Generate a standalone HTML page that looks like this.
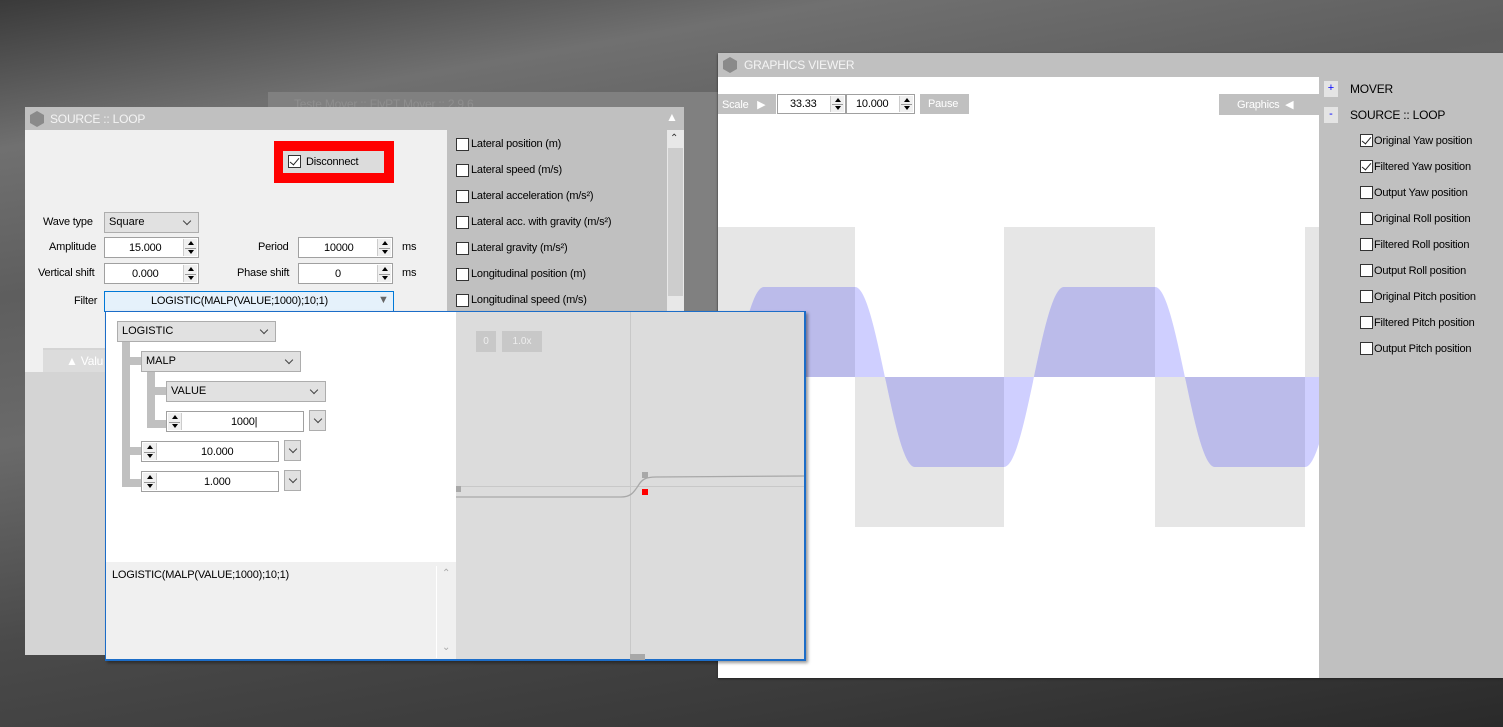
<!DOCTYPE html>
<html><head><meta charset="utf-8">
<style>
*{box-sizing:border-box;margin:0;padding:0}
body{width:1503px;height:727px;overflow:hidden;position:relative;font-family:"Liberation Sans",sans-serif;font-size:11px;color:#000;
background:linear-gradient(170deg,#3a3a3a 0%,#707070 15%,#5e5e5e 30%,#6a6a6a 45%,#4a4a4a 65%,#3a3a3a 85%,#2a2a2a 100%);}
.a{position:absolute}
.t{position:absolute;white-space:nowrap;letter-spacing:-0.2px}
.tb{background:#c0c0c0;color:#f4f4f4;font-size:12px}
.hex{position:absolute;width:14px;height:16px;background:#8a8a8a;clip-path:polygon(50% 0,100% 25%,100% 75%,50% 100%,0 75%,0 25%)}
.box{position:absolute;background:#fff;border:1px solid #a0a0a0}
.cmb{position:absolute;background:#e1e1e1;border:1px solid #adadad;padding-left:4px;line-height:19px}
.cmb:after{content:"";position:absolute;right:8px;top:5px;width:5px;height:5px;border-right:1px solid #444;border-bottom:1px solid #444;transform:rotate(45deg)}
.spin{position:absolute;top:1px;bottom:1px;width:14px;background:#f0f0f0;border-left:1px solid #ccc}
.spin:before{content:"";position:absolute;left:4px;top:2px;border:3px solid transparent;border-bottom:4px solid #000;border-top:0}
.spin:after{content:"";position:absolute;left:4px;bottom:2px;border:3px solid transparent;border-top:4px solid #000;border-bottom:0}
.spin i{position:absolute;left:1px;right:1px;top:50%;height:1px;background:#999}
.cb{position:absolute;width:13px;height:13px;background:#fff;border:1px solid #333}
.ck:after{content:"";position:absolute;left:3px;top:0px;width:4px;height:8px;border-right:1.5px solid #222;border-bottom:1.5px solid #222;transform:rotate(40deg)}
.dd{position:absolute;width:17px;height:21px;background:#e1e1e1;border:1px solid #adadad}
.dd:after{content:"";position:absolute;left:5px;top:5px;width:5px;height:5px;border-right:1px solid #444;border-bottom:1px solid #444;transform:rotate(45deg)}
.bar{position:absolute;background:#c0c0c0}
.box .t{top:4px}
</style></head><body>

<!-- background window -->
<div class="a" style="left:268px;top:92px;width:450px;height:568px;background:#808080"></div>
<div class="t" style="left:294px;top:97px;color:#8e8e8e;font-size:12px">Teste Mover :: FlyPT Mover :: 2.9.6</div>

<!-- SOURCE :: LOOP window -->
<div class="a" style="left:25px;top:107px;width:659px;height:548px;background:#d4d4d4"></div>
<div class="a tb" style="left:25px;top:107px;width:659px;height:23px"></div>
<div class="hex" style="left:30px;top:111px"></div>
<div class="t" style="left:50px;top:112px;color:#f4f4f4;font-size:12px">SOURCE :: LOOP</div>
<div class="t" style="left:666px;top:110px;color:#fff;font-size:12px">▲</div>
<div class="a" style="left:25px;top:130px;width:422px;height:218px;background:#f0f0f0"></div>
<div class="a" style="left:25px;top:348px;width:18px;height:24px;background:#f0f0f0"></div>
<div class="a" style="left:43px;top:350px;width:62px;height:22px;background:#dcdcdc"></div>
<div class="t" style="left:66px;top:354px;color:#fff;font-size:12px">▲ Valu</div>

<div class="a" style="left:274px;top:141px;width:120px;height:42px;background:#f00"></div>
<div class="a" style="left:283px;top:151px;width:101px;height:22px;background:#dcdcdc"></div>
<div class="cb ck" style="left:288px;top:155px"></div>
<div class="t" style="left:306px;top:156px">Disconnect</div>

<div class="t" style="left:43px;top:216px">Wave type</div>
<div class="cmb" style="left:104px;top:212px;width:95px;height:21px">Square</div>
<div class="t" style="left:49px;top:241px">Amplitude</div>
<div class="box" style="left:104px;top:237px;width:95px;height:21px"><span class="t" style="left:24px">15.000</span><div class="spin" style="right:1px"><i></i></div></div>
<div class="t" style="left:258px;top:241px">Period</div>
<div class="box" style="left:298px;top:237px;width:95px;height:21px"><span class="t" style="left:25px">10000</span><div class="spin" style="right:1px"><i></i></div></div>
<div class="t" style="left:402px;top:241px">ms</div>
<div class="t" style="left:38px;top:267px">Vertical shift</div>
<div class="box" style="left:104px;top:263px;width:95px;height:21px"><span class="t" style="left:27px">0.000</span><div class="spin" style="right:1px"><i></i></div></div>
<div class="t" style="left:237px;top:267px">Phase shift</div>
<div class="box" style="left:298px;top:263px;width:95px;height:21px"><span class="t" style="left:36px">0</span><div class="spin" style="right:1px"><i></i></div></div>
<div class="t" style="left:402px;top:267px">ms</div>
<div class="t" style="left:74px;top:295px">Filter</div>
<div class="a" style="left:104px;top:291px;width:290px;height:21px;background:#e5f1fb;border:1px solid #0078d7"></div>
<div class="t" style="left:151px;top:295px">LOGISTIC(MALP(VALUE;1000);10;1)</div>
<div class="t" style="left:378px;top:294px;color:#666">▼</div>

<!-- right list -->
<div class="a" style="left:447px;top:130px;width:220px;height:182px;background:#c0c0c0"></div>
<div class="a" style="left:667px;top:130px;width:17px;height:182px;background:#e8e8e8"></div>
<div class="a" style="left:668px;top:148px;width:15px;height:148px;background:#cdcdcd"></div>
<div class="t" style="left:670px;top:133px;font-size:10px;color:#333">⌃</div>
<div class="cb" style="left:456px;top:138px"></div><div class="t" style="left:471px;top:138px">Lateral position (m)</div>
<div class="cb" style="left:456px;top:164px"></div><div class="t" style="left:471px;top:164px">Lateral speed (m/s)</div>
<div class="cb" style="left:456px;top:190px"></div><div class="t" style="left:471px;top:190px">Lateral acceleration (m/s²)</div>
<div class="cb" style="left:456px;top:216px"></div><div class="t" style="left:471px;top:216px">Lateral acc. with gravity (m/s²)</div>
<div class="cb" style="left:456px;top:242px"></div><div class="t" style="left:471px;top:242px">Lateral gravity (m/s²)</div>
<div class="cb" style="left:456px;top:268px"></div><div class="t" style="left:471px;top:268px">Longitudinal position (m)</div>
<div class="cb" style="left:456px;top:294px"></div><div class="t" style="left:471px;top:294px">Longitudinal speed (m/s)</div>

<!-- GRAPHICS VIEWER -->
<div class="a" style="left:718px;top:53px;width:785px;height:625px;background:#fff;box-shadow:0 1px 2px #222"></div>
<div class="a tb" style="left:718px;top:53px;width:785px;height:24px"></div>
<div class="hex" style="left:723px;top:57px"></div>
<div class="t" style="left:744px;top:58px;color:#f4f4f4;font-size:12px">GRAPHICS VIEWER</div>
<svg class="a" style="left:0;top:0" width="1503" height="727">
<defs>
<clipPath id="plot"><rect x="718" y="77" width="601" height="601"/></clipPath>
<clipPath id="gr"><rect x="718" y="227" width="137" height="150"/><rect x="855" y="377" width="149" height="150"/><rect x="1004" y="227" width="151" height="150"/><rect x="1155" y="377" width="150" height="150"/><rect x="1305" y="227" width="14" height="150"/></clipPath>
</defs>
<g clip-path="url(#plot)">
<g fill="#e6e6e6"><rect x="718" y="227" width="137" height="150"/><rect x="855" y="377" width="149" height="150"/><rect x="1004" y="227" width="151" height="150"/><rect x="1155" y="377" width="150" height="150"/><rect x="1305" y="227" width="14" height="150"/></g>
<path fill="#cfcfff" d="M704,467 C726,467 742,287 764,287 L855,287 C877,287 893,467 915,467 L1004,467 C1026,467 1042,287 1064,287 L1155,287 C1177,287 1193,467 1215,467 L1305,467 C1327,467 1343,287 1365,287 L1365,377 L704,377 Z"/>
<g clip-path="url(#gr)">
<path fill="#bbbbea" d="M704,467 C726,467 742,287 764,287 L855,287 C877,287 893,467 915,467 L1004,467 C1026,467 1042,287 1064,287 L1155,287 C1177,287 1193,467 1215,467 L1305,467 C1327,467 1343,287 1365,287 L1365,377 L704,377 Z"/>
</g>
</g>
</svg>
<div class="a" style="left:718px;top:94px;width:58px;height:20px;background:#c0c0c0"></div>
<div class="t" style="left:722px;top:98px;color:#fff">Scale &nbsp;&nbsp;▶</div>
<div class="box" style="left:777px;top:94px;width:69px;height:20px"><span class="t" style="left:12px;top:3px">33.33</span><div class="spin" style="right:1px"><i></i></div></div>
<div class="box" style="left:846px;top:94px;width:69px;height:20px"><span class="t" style="left:9px;top:3px">10.000</span><div class="spin" style="right:1px"><i></i></div></div>
<div class="a" style="left:920px;top:94px;width:49px;height:20px;background:#c0c0c0"></div>
<div class="t" style="left:928px;top:98px;color:#fff">Pause</div>
<div class="a" style="left:1219px;top:94px;width:100px;height:21px;background:#c0c0c0"></div>
<div class="t" style="left:1237px;top:98px;color:#fff">Graphics &nbsp;◀</div>

<div class="a" style="left:1319px;top:77px;width:184px;height:601px;background:#c0c0c0"></div>
<div class="a" style="left:1324px;top:81px;width:14px;height:16px;background:#e4e4e4;color:#00f;text-align:center;line-height:15px">+</div>
<div class="t" style="left:1350px;top:82px;font-size:12px">MOVER</div>
<div class="a" style="left:1324px;top:107px;width:14px;height:16px;background:#e4e4e4;color:#00f;text-align:center;line-height:15px">-</div>
<div class="t" style="left:1350px;top:108px;font-size:12px">SOURCE :: LOOP</div>
<div class="cb ck" style="left:1360px;top:134px"></div><div class="t" style="left:1374px;top:135px">Original Yaw position</div>
<div class="cb ck" style="left:1360px;top:160px"></div><div class="t" style="left:1374px;top:161px">Filtered Yaw position</div>
<div class="cb" style="left:1360px;top:186px"></div><div class="t" style="left:1374px;top:187px">Output Yaw position</div>
<div class="cb" style="left:1360px;top:212px"></div><div class="t" style="left:1374px;top:213px">Original Roll position</div>
<div class="cb" style="left:1360px;top:238px"></div><div class="t" style="left:1374px;top:239px">Filtered Roll position</div>
<div class="cb" style="left:1360px;top:264px"></div><div class="t" style="left:1374px;top:265px">Output Roll position</div>
<div class="cb" style="left:1360px;top:290px"></div><div class="t" style="left:1374px;top:291px">Original Pitch position</div>
<div class="cb" style="left:1360px;top:316px"></div><div class="t" style="left:1374px;top:317px">Filtered Pitch position</div>
<div class="cb" style="left:1360px;top:342px"></div><div class="t" style="left:1374px;top:343px">Output Pitch position</div>

<!-- Filter popup -->
<div class="a" style="left:105px;top:311px;width:701px;height:350px;background:#fff;border:1px solid #1c6dc8;border-bottom-width:2px;border-right-width:2px;box-shadow:2px 2px 3px rgba(0,0,0,.4)"></div>
<div class="a" style="left:106px;top:562px;width:350px;height:97px;background:#f0f0f0"></div>
<div class="a" style="left:436px;top:566px;width:1px;height:92px;background:#fff"></div>
<div class="t" style="left:442px;top:568px;color:#aaa;font-size:10px">⌃</div>
<div class="t" style="left:442px;top:642px;color:#aaa;font-size:10px">⌄</div>
<div class="t" style="left:112px;top:569px">LOGISTIC(MALP(VALUE;1000);10;1)</div>
<div class="a" style="left:456px;top:312px;width:348px;height:347px;background:#dcdcdc"></div>
<div class="a" style="left:630px;top:312px;width:1px;height:347px;background:#c8c8c8"></div>
<div class="a" style="left:456px;top:486px;width:348px;height:1px;background:#c8c8c8"></div>
<div class="a" style="left:476px;top:331px;width:20px;height:21px;background:#c8c8c8;color:#eee;text-align:center;line-height:21px;font-size:10px">0</div>
<div class="a" style="left:502px;top:331px;width:40px;height:21px;background:#c8c8c8;color:#eee;text-align:center;line-height:21px;font-size:10px">1.0x</div>
<svg class="a" style="left:456px;top:312px" width="348" height="347"><path d="M0,185 L165,185 C175,185 178,180 182,174 C186,167 190,165 200,165 L348,164" fill="none" stroke="#a8a8a8" stroke-width="1.3"/></svg>
<div class="a" style="left:456px;top:486px;width:5px;height:6px;background:#a8a8a8"></div>
<div class="a" style="left:642px;top:472px;width:6px;height:6px;background:#a8a8a8"></div>
<div class="a" style="left:642px;top:489px;width:6px;height:6px;background:#f00"></div>
<div class="a" style="left:630px;top:654px;width:15px;height:6px;background:#a8a8a8"></div>

<!-- tree -->
<div class="bar" style="left:122px;top:341px;width:8px;height:146px"></div>
<div class="bar" style="left:122px;top:357px;width:20px;height:8px"></div>
<div class="bar" style="left:122px;top:447px;width:20px;height:8px"></div>
<div class="bar" style="left:122px;top:479px;width:20px;height:8px"></div>
<div class="bar" style="left:147px;top:371px;width:8px;height:57px"></div>
<div class="bar" style="left:147px;top:387px;width:20px;height:8px"></div>
<div class="bar" style="left:147px;top:420px;width:20px;height:8px"></div>
<div class="cmb" style="left:117px;top:321px;width:159px;height:21px">LOGISTIC</div>
<div class="cmb" style="left:141px;top:351px;width:160px;height:21px">MALP</div>
<div class="cmb" style="left:166px;top:381px;width:160px;height:21px">VALUE</div>
<div class="box" style="left:166px;top:411px;width:138px;height:21px"><div class="spin" style="left:1px;border-left:0;border-right:1px solid #ccc"><i></i></div><span class="t" style="left:64px">1000|</span></div>
<div class="dd" style="left:309px;top:410px"></div>
<div class="box" style="left:141px;top:441px;width:138px;height:21px"><div class="spin" style="left:1px;border-left:0;border-right:1px solid #ccc"><i></i></div><span class="t" style="left:59px">10.000</span></div>
<div class="dd" style="left:284px;top:440px"></div>
<div class="box" style="left:141px;top:471px;width:138px;height:21px"><div class="spin" style="left:1px;border-left:0;border-right:1px solid #ccc"><i></i></div><span class="t" style="left:62px">1.000</span></div>
<div class="dd" style="left:284px;top:470px"></div>
</body></html>
